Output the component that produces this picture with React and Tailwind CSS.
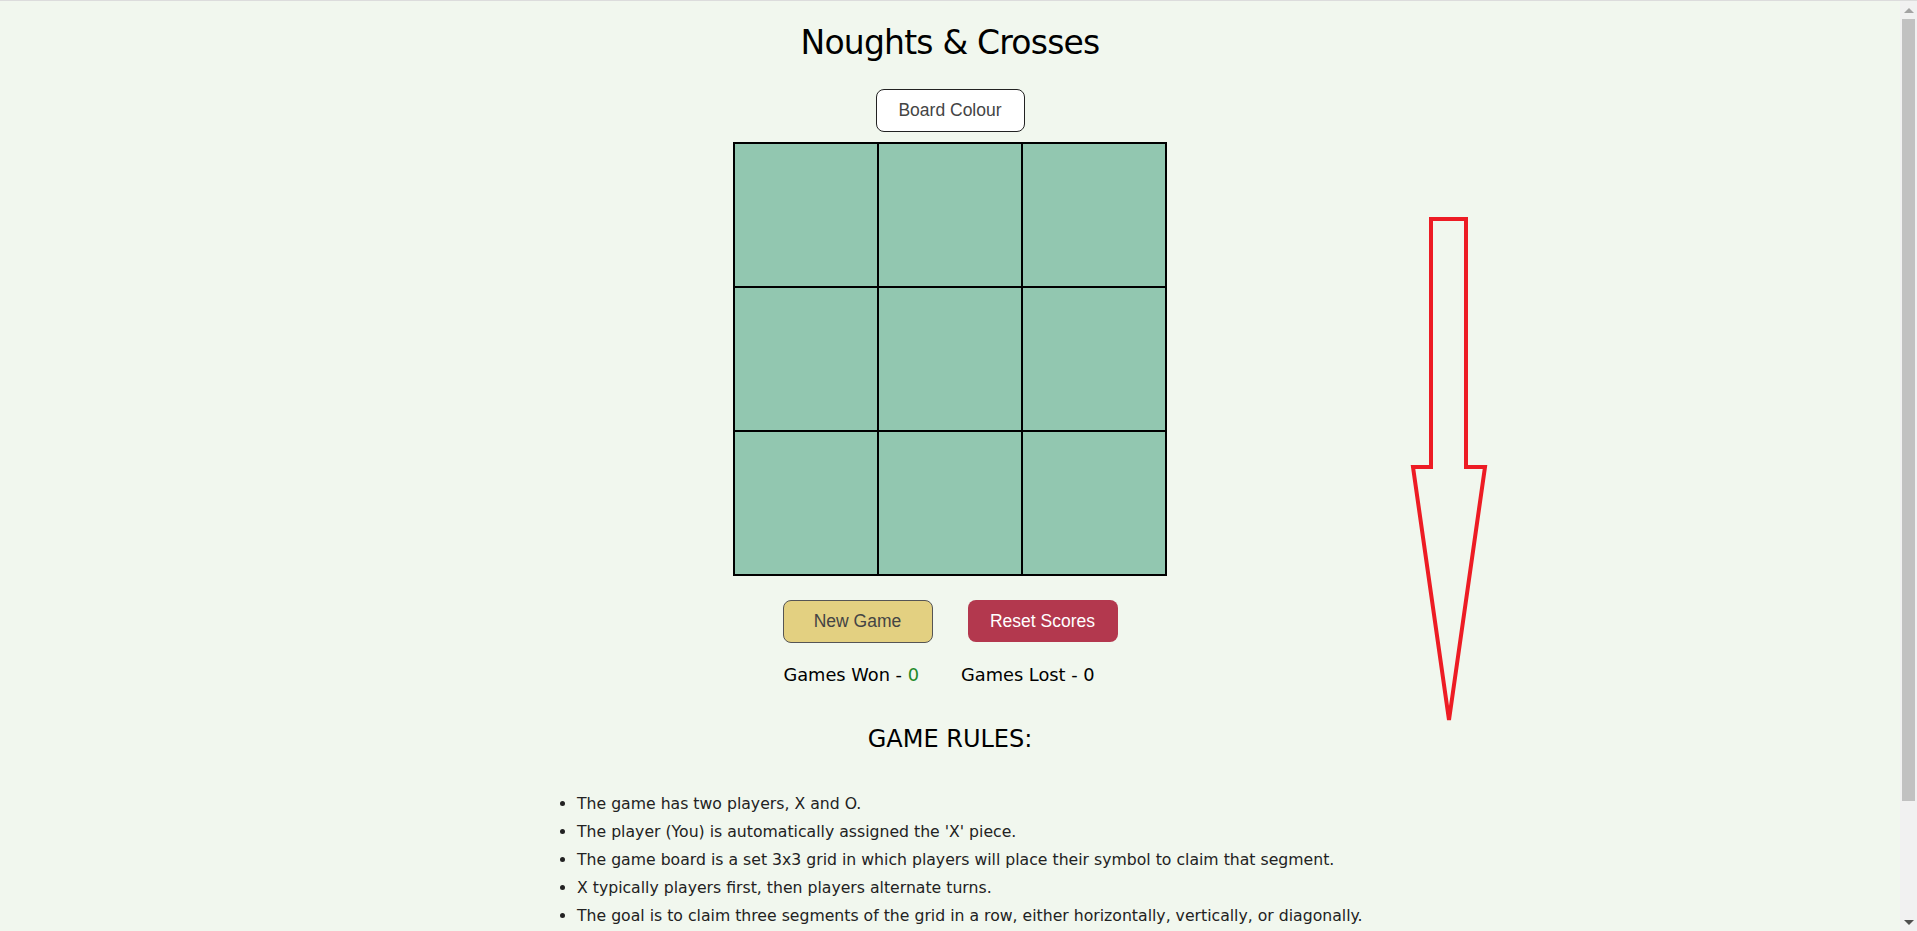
const rules = [
  "The game has two players, X and O.",
  "The player (You) is automatically assigned the 'X' piece.",
  "The game board is a set 3x3 grid in which players will place their symbol to claim that segment.",
  "X typically players first, then players alternate turns.",
  "The goal is to claim three segments of the grid in a row, either horizontally, vertically, or diagonally.",
];

const heading = { fontFamily: '"DejaVu Sans", "Noto Sans", sans-serif' };
const arial = { fontFamily: '"Liberation Sans", Arial, sans-serif' };

function Arrow() {
  return (
    <svg
      className="absolute left-[1400px] top-[210px]"
      width="100"
      height="520"
      viewBox="0 0 100 520"
      fill="none"
    >
      <polygon
        points="31,8 66,8 66,256 85,256 49,509 13,256 31,256"
        stroke="#ed1c24"
        strokeWidth="4"
        strokeLinejoin="miter"
      />
    </svg>
  );
}

function Scrollbar() {
  return (
    <div className="w-[17px] shrink-0 bg-[#f1f1f1] flex flex-col items-center">
      <div className="h-[18px] flex items-center justify-center">
        <div className="w-0 h-0 border-l-[5px] border-r-[5px] border-b-[5px] border-l-transparent border-r-transparent border-b-[#a3a3a3]" />
      </div>
      <div className="w-[13px] h-[782px] bg-[#c1c1c1]" />
      <div className="flex-1" />
      <div className="h-[18px] flex items-center justify-center">
        <div className="w-0 h-0 border-l-[5px] border-r-[5px] border-t-[5px] border-l-transparent border-r-transparent border-t-[#505050]" />
      </div>
    </div>
  );
}

export default function App() {
  return (
    <div className="relative h-[931px] overflow-hidden flex bg-[#f1f7ee] border-t border-[#dcdcdc] text-black" style={heading}>
      <main className="flex-1 min-w-0">
        <h1 className="h-[88px] pt-[20px] text-center text-[33px] tracking-[-0.8px] leading-[44px] font-normal">
          Noughts &amp; Crosses
        </h1>

        <div className="flex justify-center">
          <button
            type="button"
            className="w-[149px] h-[43px] bg-white border border-[#222] rounded-[8px] text-[17.5px] text-[#444]"
            style={arial}
          >
            Board Colour
          </button>
        </div>

        <div className="flex justify-center mt-[10px]">
          <div className="grid grid-cols-3 border border-black bg-[#92c7b0]">
            {Array.from({ length: 9 }).map((_, i) => (
              <div key={i} className="w-[144px] h-[144px] border border-black" />
            ))}
          </div>
        </div>

        <div className="flex justify-center gap-[35px] mt-[24px]">
          <button
            type="button"
            className="w-[150px] h-[43px] bg-[#e3d081] border border-[#555] rounded-[8px] text-[17.5px] text-[#444]"
            style={arial}
          >
            New Game
          </button>
          <button
            type="button"
            className="w-[150px] h-[42px] bg-[#b3384e] rounded-[8px] text-[17.5px] text-white"
            style={arial}
          >
            Reset Scores
          </button>
        </div>

        <div className="flex justify-center gap-[42px] pr-[22px] mt-[19px] text-[17.8px] leading-[26px]">
          <p>
            Games Won - <span className="text-[#1e8a2a]">0</span>
          </p>
          <p>
            Games Lost - <span>0</span>
          </p>
        </div>

        <h2 className="mt-[36px] text-center text-[24px] leading-[30px] font-normal">GAME RULES:</h2>

        <ul className="w-[794px] mx-auto mt-[36px] list-disc pl-[24px] text-[15.7px] leading-[28px] text-[#222]">
          {rules.map((r) => (
            <li key={r} className="whitespace-nowrap">
              {r}
            </li>
          ))}
        </ul>
      </main>

      <Scrollbar />
      <Arrow />
    </div>
  );
}
